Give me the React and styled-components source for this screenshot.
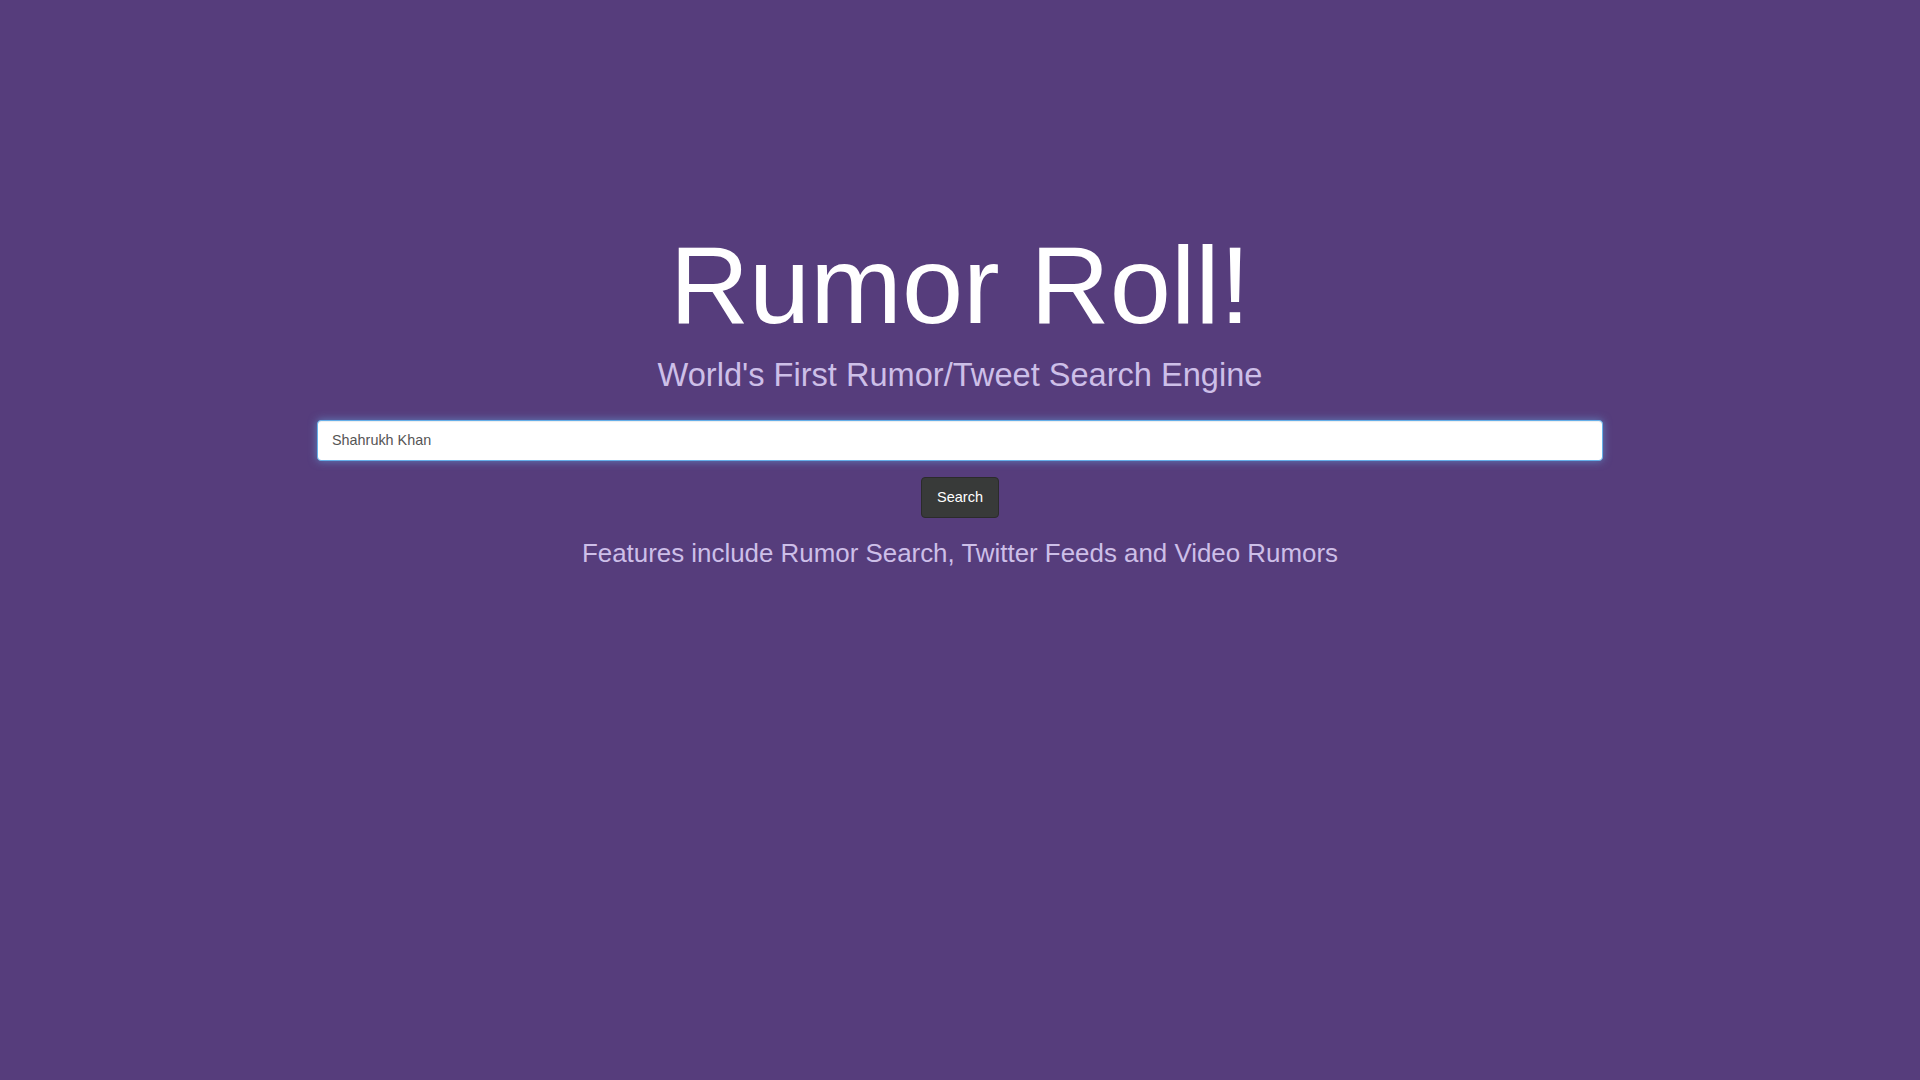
import React from "react";
import styled, { createGlobalStyle } from "styled-components";

const GlobalStyle = createGlobalStyle`
  html, body {
    margin: 0;
    padding: 0;
    background-color: #563d7c;
  }
  body {
    font-family: "Liberation Sans", Arial, sans-serif;
  }
`;

const Page = styled.main`
  min-height: 100vh;
  box-sizing: border-box;
  padding-top: 224px;
  display: flex;
  flex-direction: column;
  align-items: center;
  background-color: #563d7c;
`;

const Title = styled.h1`
  margin: 0;
  font-size: 110px;
  font-weight: normal;
  line-height: 1.1;
  color: #fff;
  text-align: center;
`;

const Tagline = styled.p`
  margin: ${(p) => p.$gap || 0}px 0 0;
  font-size: ${(p) => p.$size}px;
  line-height: 1.1;
  color: #cdbfe8;
  text-align: center;
`;

const SearchForm = styled.form`
  margin-top: 27px;
  display: flex;
  flex-direction: column;
  align-items: center;
  gap: 16px;
`;

const SearchInput = styled.input`
  box-sizing: border-box;
  width: 1286px;
  height: 41px;
  padding: 6px 14px;
  font-family: "Liberation Sans", Arial, sans-serif;
  font-size: 14.4px;
  color: #555;
  background: #fff;
  border: 1px solid #66afe9;
  border-radius: 4px;
  outline: none;
  box-shadow: inset 0 1px 1px rgba(0, 0, 0, 0.075),
    0 0 8px rgba(102, 175, 233, 0.6);
`;

const SearchButton = styled.button`
  box-sizing: border-box;
  height: 41px;
  padding: 0 15px;
  font-family: "Liberation Sans", Arial, sans-serif;
  font-size: 14.5px;
  color: #fff;
  background-color: #383a39;
  border: 1px solid #2b2b2b;
  border-radius: 4px;
  cursor: pointer;
`;

function App() {
  return (
    <>
      <GlobalStyle />
      <Page>
        <Title>Rumor Roll!</Title>
        <Tagline $size={32.6} $gap={12}>
          World's First Rumor/Tweet Search Engine
        </Tagline>
        <SearchForm onSubmit={(e) => e.preventDefault()}>
          <SearchInput type="text" defaultValue="Shahrukh Khan" />
          <SearchButton type="submit">Search</SearchButton>
        </SearchForm>
        <Tagline $size={25.9} $gap={21}>
          Features include Rumor Search, Twitter Feeds and Video Rumors
        </Tagline>
      </Page>
    </>
  );
}

export default App;
